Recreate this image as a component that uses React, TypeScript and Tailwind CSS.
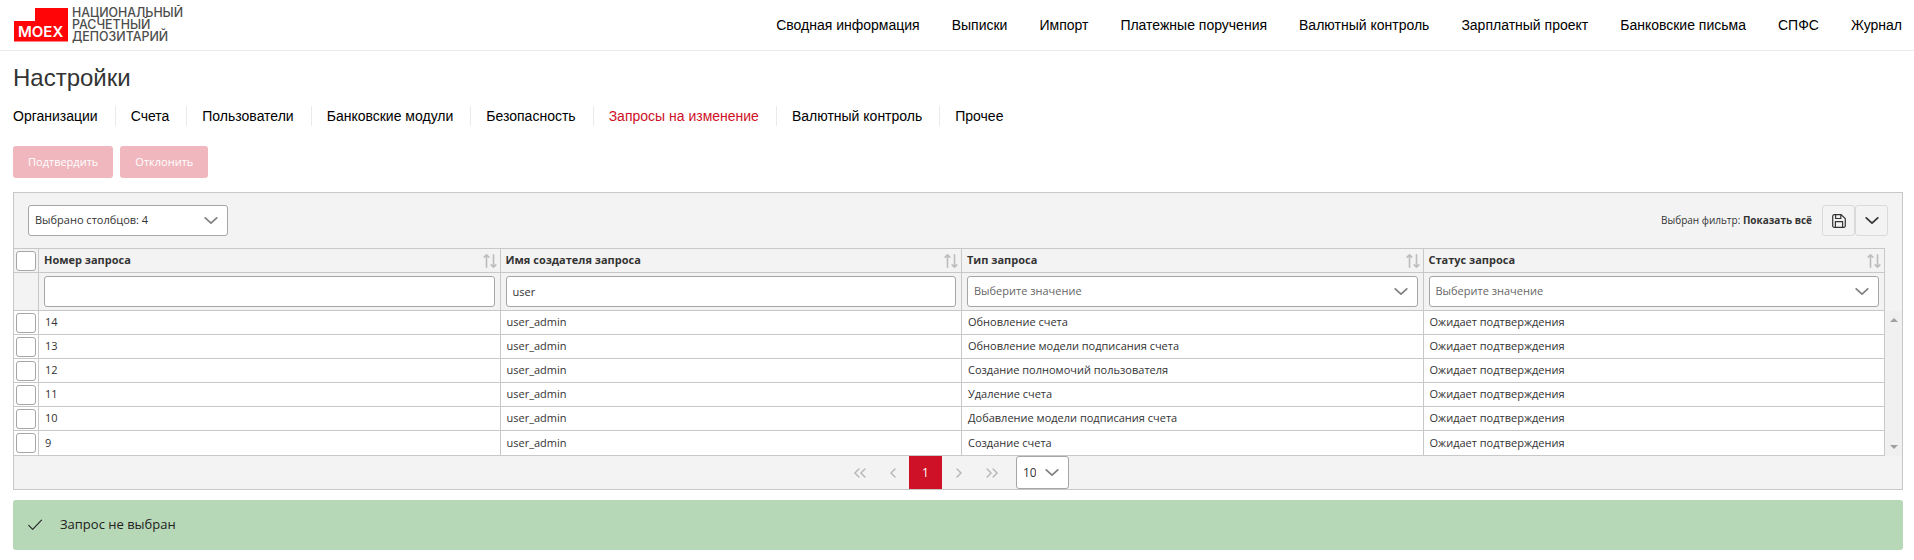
import React from "react";

const navItems = ["Сводная информация", "Выписки", "Импорт", "Платежные поручения", "Валютный контроль", "Зарплатный проект", "Банковские письма", "СПФС", "Журнал"];
const tabs = ["Организации", "Счета", "Пользователи", "Банковские модули", "Безопасность", "Запросы на изменение", "Валютный контроль", "Прочее"];
const activeTab = "Запросы на изменение";
const columns = ["Номер запроса", "Имя создателя запроса", "Тип запроса", "Статус запроса"];
const rows = [
  ["14", "Обновление счета"],
  ["13", "Обновление модели подписания счета"],
  ["12", "Создание полномочий пользователя"],
  ["11", "Удаление счета"],
  ["10", "Добавление модели подписания счета"],
  ["9", "Создание счета"],
];

function Chevron({ className = "" }: { className?: string }) {
  return (
    <svg viewBox="0 0 14 14" aria-hidden="true" className={`h-3.5 w-3.5 ${className}`} fill="none" stroke="currentColor" strokeWidth="1.7" strokeLinecap="round" strokeLinejoin="round">
      <path d="M1.2 3.8 7 9.2 12.8 3.8" />
    </svg>
  );
}

function SortIcon() {
  return (
    <svg viewBox="0 0 14 14" aria-hidden="true" className="h-3.5 w-3.5" fill="none" stroke="currentColor" strokeWidth="1.6" strokeLinecap="round" strokeLinejoin="round">
      <path d="M3.5 13.2V.8M1.2 3.1 3.5.8 5.8 3.1M10.5.8v12.4M8.2 10.9l2.3 2.3 2.3-2.3" />
    </svg>
  );
}

function SaveIcon() {
  return (
    <svg viewBox="0 0 14 14" aria-hidden="true" className="h-3.5 w-3.5" fill="none" stroke="currentColor" strokeWidth="1.2" strokeLinejoin="round">
      <path d="M2.2.7h7L13.3 4.6v7.2a1.5 1.5 0 0 1-1.5 1.5H2.2A1.5 1.5 0 0 1 .7 11.8V2.2A1.5 1.5 0 0 1 2.2.7Z" />
      <path d="M3.6.8v3.7h5.2V.8M3.4 13.2V7.6h7.2v5.6" />
    </svg>
  );
}

function Logo() {
  return (
    <a href="#" aria-label="MOEX Национальный расчетный депозитарий" className="block">
      <svg viewBox="0 0 174 40" className="h-10 w-[174px]" fontFamily="Inter, 'Liberation Sans', sans-serif">
        <path d="M21 3h33v33.5H0V16h21Z" fill="#ff0508" />
        <text x="4" y="32" fontSize="15" fontWeight="600" fill="#fff">MOEX</text>
        <g fontSize="12.4" fontWeight="500" fill="#4d4d4d">
          <text x="58" y="12">НАЦИОНАЛЬНЫЙ</text>
          <text x="58" y="24">РАСЧЕТНЫЙ</text>
          <text x="58" y="36">ДЕПОЗИТАРИЙ</text>
        </g>
      </svg>
    </a>
  );
}

function Check({ label }: { label: string }) {
  return (
    <input type="checkbox" aria-label={label} className="mx-auto block h-5 w-5 appearance-none rounded-[3px] border border-[#a6a6a6] bg-white checked:bg-[#ce1126]" />
  );
}

function Dropdown({ label, value, className = "", muted = false }: { label: string; value: string; className?: string; muted?: boolean }) {
  return (
    <div className={`relative ${className}`}>
      <select aria-label={label} className={`block h-full w-full appearance-none rounded-[3px] border border-[#a6a6a6] bg-white pr-8 pl-1.5 ${muted ? "text-[#666]" : "text-[#333]"}`}>
        <option>{value}</option>
      </select>
      <Chevron className="pointer-events-none absolute inset-y-0 right-2.5 my-auto text-[#808080]" />
    </div>
  );
}

function PagerButton({ label, double = false, flip = false }: { label: string; double?: boolean; flip?: boolean }) {
  return (
    <button type="button" aria-label={label} disabled className="flex h-[33px] w-[33px] items-center justify-center text-[#b8b8b8]">
      <svg viewBox="0 0 12 12" aria-hidden="true" className={`h-3 w-3 ${flip ? "rotate-180" : ""}`} fill="none" stroke="currentColor" strokeWidth="1.5" strokeLinecap="round" strokeLinejoin="round">
        <path d={double ? "M4.9 2 .9 6l4 4M10.9 2l-4 4 4 4" : "M8 2 4 6l4 4"} />
      </svg>
    </button>
  );
}

export default function App() {
  return (
    <div className="min-h-screen bg-white font-['Open_Sans','Noto_Sans',sans-serif] text-[11px] text-[#333]">
      <header className="flex h-[51px] items-center justify-between border-b border-[#ebebeb] pr-3 pl-3.5 font-['Liberation_Sans',Arial,sans-serif]">
        <Logo />
        <nav className="flex gap-8 text-sm text-black">
          {navItems.map((item) => (
            <a key={item} href="#">{item}</a>
          ))}
        </nav>
      </header>

      <main className="pr-[11px] pb-2.5 pl-[13px]">
        <h1 className="pt-[11px] font-['Liberation_Sans',Arial,sans-serif] text-2xl leading-8">Настройки</h1>

        <nav className="mt-3 flex font-['Liberation_Sans',Arial,sans-serif] text-sm leading-5 text-black">
          {tabs.map((tab) => (
            <a key={tab} href="#" className={`mr-[15px] border-r border-[#ebebeb] pr-[17px] last:border-r-0 ${tab === activeTab ? "text-[#ce1126]" : ""}`}>{tab}</a>
          ))}
        </nav>

        <div className="mt-5 flex gap-[7px] font-medium text-white">
          <button type="button" disabled className="h-8 rounded-[3px] bg-[#f0b7be] px-[15px]">Подтвердить</button>
          <button type="button" disabled className="h-8 rounded-[3px] bg-[#f0b7be] px-[15px]">Отклонить</button>
        </div>

        <section className="mt-3.5 border border-[#c8c8c8] bg-[#f3f3f3]">
          <div className="flex h-[55px] items-center justify-between px-3.5">
            <Dropdown label="Столбцы" value="Выбрано столбцов: 4" className="h-[31px] w-[200px]" />
            <div className="flex items-center">
              <p className="mr-2.5 text-[10px]">Выбран фильтр: <b className="font-bold">Показать всё</b></p>
              <button type="button" aria-label="Сохранить фильтр" className="flex h-[31px] w-[33px] items-center justify-center rounded-[3px] border border-[#dadada]"><SaveIcon /></button>
              <button type="button" aria-label="Выбрать фильтр" className="flex h-[31px] w-[33px] items-center justify-center rounded-[3px] border border-[#dadada]"><Chevron /></button>
            </div>
          </div>

          <div className="flex">
            <div className="min-w-0 flex-1">
              <table className="w-full table-fixed border-separate border-spacing-0 border-t border-[#c8c8c8]">
                <colgroup>
                  <col className="w-[25px]" />
                  <col /><col /><col /><col />
                </colgroup>
                <thead>
                  <tr className="h-6">
                    <th className="border-r border-b border-[#c8c8c8] p-0"><Check label="Выбрать все" /></th>
                    {columns.map((column) => (
                      <th key={column} scope="col" className="border-r border-b border-[#c8c8c8] px-[5px] py-0 text-left font-bold">
                        <div className="flex items-center justify-between">
                          {column}
                          <button type="button" aria-label={`Сортировать: ${column}`} className="-mr-0.5 text-[#bdbdbd]"><SortIcon /></button>
                        </div>
                      </th>
                    ))}
                  </tr>
                  <tr className="h-[38px]">
                    <td className="border-r border-b border-[#c8c8c8] p-0" />
                    <td className="border-r border-b border-[#c8c8c8] px-[5px] py-0">
                      <input aria-label={columns[0]} className="block h-[31px] w-full rounded-[3px] border border-[#a6a6a6] bg-white px-1.5" />
                    </td>
                    <td className="border-r border-b border-[#c8c8c8] px-[5px] py-0">
                      <input aria-label={columns[1]} defaultValue="user" className="block h-[31px] w-full rounded-[3px] border border-[#a6a6a6] bg-white px-1.5" />
                    </td>
                    {columns.slice(2).map((column) => (
                      <td key={column} className="border-r border-b border-[#c8c8c8] px-[5px] py-0 font-normal">
                        <Dropdown label={column} value="Выберите значение" className="h-[31px]" muted />
                      </td>
                    ))}
                  </tr>
                </thead>
                <tbody className="bg-white">
                  {rows.map(([id, type]) => (
                    <tr key={id} className="h-6 last:h-[25px]">
                      <td className="border-r border-b border-[#c8c8c8] p-0"><Check label={`Выбрать запрос ${id}`} /></td>
                      <td className="border-r border-b border-[#c8c8c8] px-1.5 py-0">{id}</td>
                      <td className="border-r border-b border-[#c8c8c8] px-1.5 py-0">user_admin</td>
                      <td className="border-r border-b border-[#c8c8c8] px-1.5 py-0">{type}</td>
                      <td className="border-r border-b border-[#c8c8c8] px-1.5 py-0">Ожидает подтверждения</td>
                    </tr>
                  ))}
                </tbody>
              </table>
            </div>
            <div aria-hidden="true" className="flex w-[17px] flex-col pt-[63px] text-[#a0a0a0]">
              <div className="flex flex-1 flex-col items-center justify-between bg-[#f0f0f0] py-[7px]">
                <svg viewBox="0 0 8 4" className="h-1 w-2" fill="currentColor"><path d="M0 4 4 0l4 4Z" /></svg>
                <svg viewBox="0 0 8 4" className="h-1 w-2" fill="currentColor"><path d="M0 0h8L4 4Z" /></svg>
              </div>
            </div>
          </div>

          <div className="flex justify-center pr-1 text-xs">
            <PagerButton label="Первая страница" double />
            <PagerButton label="Предыдущая страница" />
            <button type="button" aria-current="page" className="h-[33px] w-[33px] bg-[#ce1126] text-white">1</button>
            <PagerButton label="Следующая страница" flip />
            <PagerButton label="Последняя страница" double flip />
            <Dropdown label="Строк на странице" value="10" className="ml-2 h-[33px] w-[53px]" />
          </div>
        </section>

        <div role="status" className="mt-2.5 flex h-[50px] items-center gap-[18px] rounded-[3px] bg-[#b7d8b7] px-[15px] text-[13px] text-[#222]">
          <svg viewBox="0 0 14 12" aria-hidden="true" className="h-3 w-3.5" fill="none" stroke="currentColor" strokeWidth="1.1" strokeLinecap="round" strokeLinejoin="round"><path d="M.7 6.4 4.7 10.4 13.5 1.2" /></svg>
          Запрос не выбран
        </div>
      </main>
    </div>
  );
}
